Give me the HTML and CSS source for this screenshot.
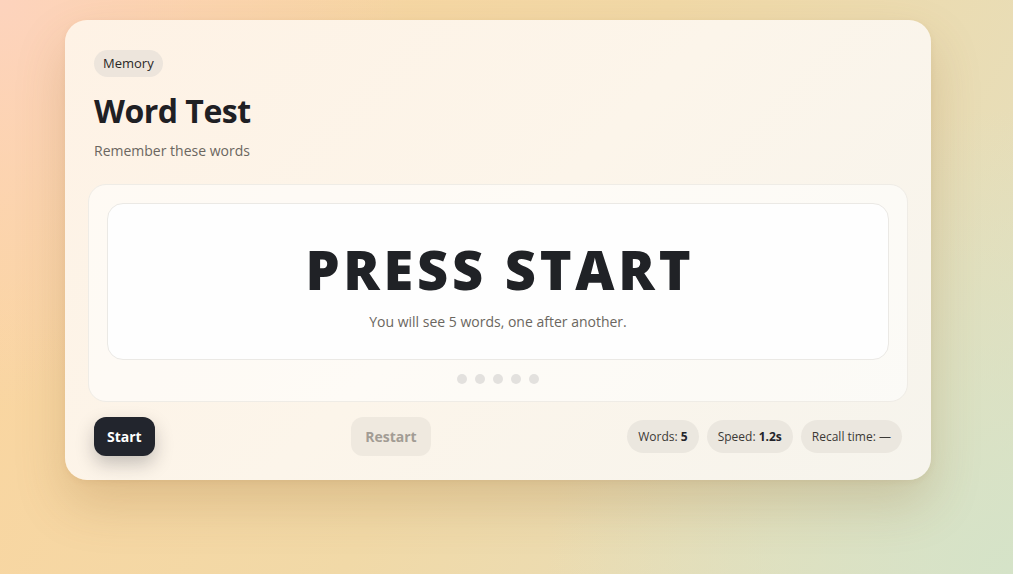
FILE: index.html
```html
<!DOCTYPE html>
<html lang="en">
<head>
<meta charset="utf-8">
<title>Word Test</title>
<link rel="stylesheet" href="styles.css">
</head>
<body>
<main class="card">
  <span class="badge">Memory</span>
  <h1 class="title">Word Test</h1>
  <p class="subtitle">Remember these words</p>
  <section class="stage">
    <div class="screen">
      <div class="word">PRESS START</div>
      <div class="hint">You will see 5 words, one after another.</div>
    </div>
    <div class="dots">
      <span class="dot"></span><span class="dot"></span><span class="dot"></span><span class="dot"></span><span class="dot"></span>
    </div>
  </section>
  <div class="controls">
    <button class="btn btn-primary">Start</button>
    <button class="btn btn-muted">Restart</button>
    <div class="stats">
      <span class="pill">Words: <b>5</b></span>
      <span class="pill">Speed: <b>1.2s</b></span>
      <span class="pill">Recall time: —</span>
    </div>
  </div>
</main>
</body>
</html>
```

FILE: styles.css
```css
* { box-sizing: border-box; }
html, body { height: 100%; }
body {
  margin: 0;
  font-family: "Open Sans", "Noto Sans", sans-serif;
  color: #1f2024;
  background:
    radial-gradient(circle at 0% 0%, #fdd3bd 0%, rgba(253,211,189,0) 35%),
    radial-gradient(circle at 100% 100%, #d5e3c8 0%, rgba(213,227,200,0) 40%),
    linear-gradient(120deg, #fdd49e 0%, #f1d9a7 50%, #e2e0c2 100%);
  padding: 20px 82px 0 65px;
}
.card {
  width: 866px;
  height: 460px;
  border-radius: 22px;
  padding: 30px 29px 24px;
  background: linear-gradient(135deg, #fef2e5 0%, #fcf5ea 50%, #f6f4ed 100%);
  box-shadow: 0 24px 50px rgba(140, 95, 40, 0.22), 0 2px 6px rgba(140, 95, 40, 0.08);
  display: flex;
  flex-direction: column;
  align-items: flex-start;
}
.badge {
  display: inline-block;
  font-size: 13px;
  line-height: 27px;
  height: 27px;
  padding: 0 9px;
  border-radius: 14px;
  background: #ede5dc;
  color: #2a2826;
}
.title {
  margin: 14px 0 0;
  font-size: 32px;
  line-height: 40px;
  font-weight: 700;
  letter-spacing: -0.5px;
  color: #1f2024;
}
.subtitle {
  margin: 10px 0 0;
  font-size: 14px;
  line-height: 20px;
  color: #6b6660;
}
.stage {
  align-self: stretch;
  margin: 23px -6px 0;
  padding: 18px 18px 17px;
  border-radius: 18px;
  background: rgba(255, 255, 255, 0.55);
  border: 1px solid #efece6;
  display: flex;
  flex-direction: column;
  gap: 14px;
}
.screen {
  height: 157px;
  border-radius: 16px;
  background: #fefefe;
  border: 1px solid #ebe9e5;
  display: flex;
  flex-direction: column;
  align-items: center;
  justify-content: center;
  padding-top: 6px;
}
.word {
  font-size: 54px;
  line-height: 62px;
  font-weight: 800;
  letter-spacing: 0.07em;
  padding-left: 0.07em;
  color: #202226;
}
.hint {
  margin-top: 12px;
  font-size: 14px;
  line-height: 20px;
  color: #6b6660;
}
.dots {
  display: flex;
  justify-content: center;
  gap: 8px;
}
.dot {
  width: 10px;
  height: 10px;
  border-radius: 50%;
  background: #e3e1de;
}
.controls {
  align-self: stretch;
  margin-top: 15px;
  display: flex;
  justify-content: space-between;
  align-items: center;
}
.btn {
  font-family: inherit;
  font-size: 14px;
  font-weight: 700;
  height: 39px;
  border: 0;
  border-radius: 12px;
  padding: 0 14px;
}
.btn-primary {
  background: #22252d;
  color: #fff;
  padding: 0 13px;
  box-shadow: 0 8px 18px rgba(34, 37, 45, 0.25);
}
.btn-muted {
  background: #efe9df;
  color: #a29c94;
}
.stats {
  display: flex;
  gap: 8px;
}
.pill {
  height: 33px;
  line-height: 33px;
  padding: 0 11px;
  border-radius: 17px;
  background: #ebe7df;
  font-size: 12px;
  color: #3b3936;
}
.pill b { color: #23242a; font-weight: 700; }
```
